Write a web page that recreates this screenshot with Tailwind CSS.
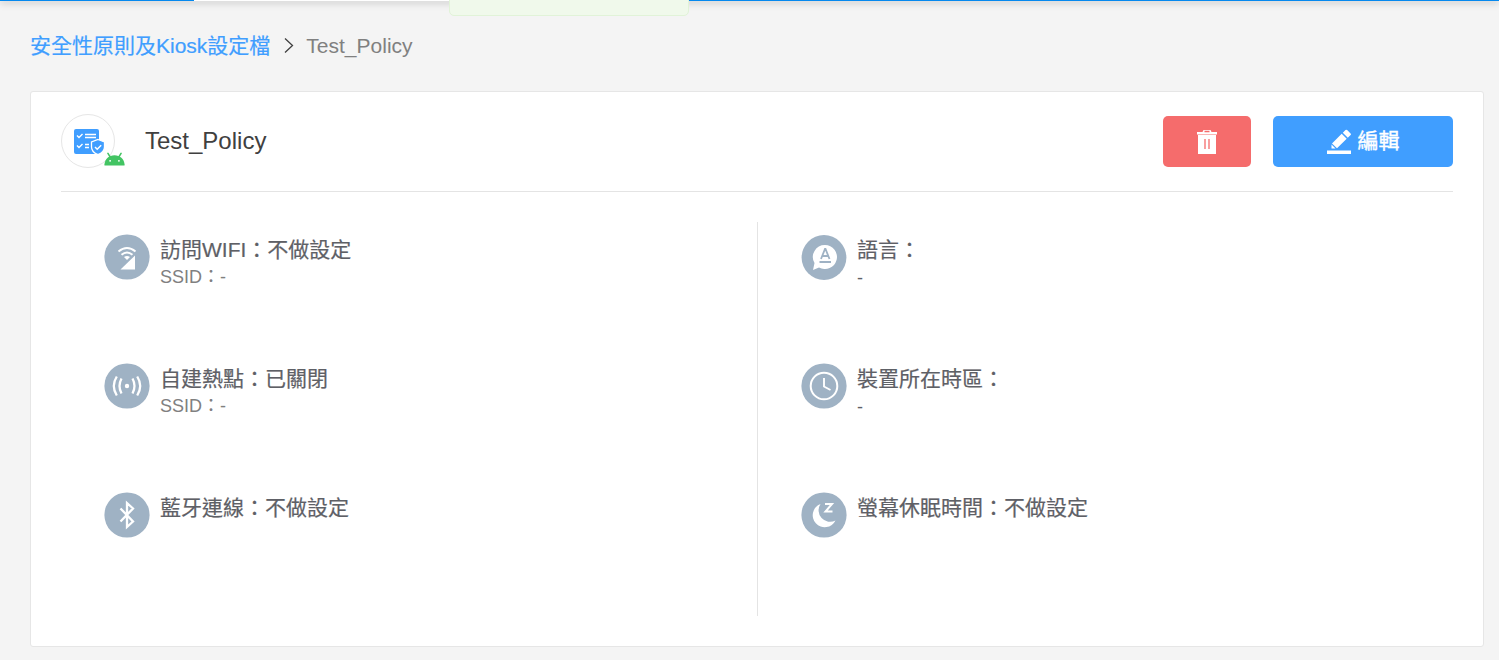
<!DOCTYPE html>
<html lang="zh-Hant">
  <head>
    <meta charset="UTF-8" />
    <meta name="viewport" content="width=device-width, initial-scale=1.0" />
    <title>Test_Policy</title>
    <script src="https://cdn.jsdelivr.net/npm/@tailwindcss/browser@4"></script>
    <style>
      body {
        font-family: 'Liberation Sans', 'Noto Sans CJK TC', sans-serif;
      }
    </style>
  </head>
  <body class="relative h-screen overflow-hidden bg-[#f4f4f4] text-[#5e6066]">
    <!-- Bottom edge of the nav bar -->
    <header class="flex h-px bg-[#0588ee] shadow-[0_1px_7px_rgba(0,0,0,0.7)]">
      <div class="ml-[194px] w-[256px] bg-white"></div>
    </header>

    <!-- Toast -->
    <div class="absolute top-[-24px] left-[449px] h-10 w-[240px] rounded-[5px] border border-[#e1f3d8] bg-[#f0f9eb]"></div>

    <nav class="flex h-[90px] items-center pl-[30px] text-[21px] leading-[30px]">
      <a href="#" class="text-[#409eff] [-webkit-text-stroke:0.2px]">安全性原則及Kiosk設定檔</a>
      <svg class="mr-3 ml-[14px] h-4 w-[10px]" viewBox="0 0 10 16" fill="none" stroke="#404040" stroke-width="1.3"><path d="M1 0.500l7.500 7-7.500 7" /></svg>
      <span class="text-[#808080]">Test_Policy</span>
    </nav>

    <main class="mr-[15px] ml-[30px] h-[556px] rounded-[3px] border border-[#e6e6e6] bg-white px-[30px] pt-[22px]">
      <div class="flex h-[78px] items-start border-b border-[#e4e4e4]">
        <div class="relative flex size-[54px] items-center justify-center rounded-full border border-[#e6e6e6]">
          <svg class="ml-[2px] h-[27px] w-[32px]" viewBox="0 0 32 27">
            <rect x="1" y="1" width="25" height="25" rx="2" fill="#409eff" />
            <g fill="none" stroke="#fff" stroke-width="1.4">
              <path d="M4 7.500l2 2 3.500-3.500M4 17.500l2 2 3.500-3.500" />
              <path d="M12 6.500h11M12 9.500h11M12 16.500h4M12 19.500h4" />
            </g>
            <path d="M25 11.500l6.500 2.500v5c0 3.500-2.500 6-6.500 7.700-4-1.700-6.500-4.200-6.500-7.700v-5z" fill="#409eff" stroke="#fff" stroke-width="1.300" />
            <path d="M22 19l2.200 2.200 4-4" fill="none" stroke="#fff" stroke-width="1.500" />
          </svg>
          <svg class="absolute top-[36px] left-[42px] h-[15px] w-[21px]" viewBox="0 0 22 16">
            <path d="M0.300 15.500v-1.500C1 8.500 5 4.500 11 4.500S21 8.500 21.700 14v1.500z" fill="#43c463" />
            <path d="M4 2.500l2.500 4M18 2.500l-2.500 4" stroke="#43c463" stroke-width="1.700" stroke-linecap="round" />
            <circle cx="6.300" cy="10.500" r="1" fill="#fff" /><circle cx="15.700" cy="10.500" r="1" fill="#fff" />
          </svg>
        </div>
        <h1 class="ml-[30px] text-2xl leading-[54px] text-[#404040]">Test_Policy</h1>
        <button class="mt-[2px] ml-auto flex h-[51px] w-[88px] items-center justify-center rounded-[5px] bg-[#f56c6c]">
          <svg class="h-[25px] w-5" viewBox="0 0 20 25">
            <path d="M0 3h5.500l1-2h7l1 2H20v2.500H0zM1 6h18v19H1z" fill="#fff" />
            <path d="M7.500 2.500h5M8 10v10M12 10v10" stroke="#f56c6c" stroke-width="1.300" fill="none" />
          </svg>
        </button>
        <button class="mt-[2px] ml-[22px] flex h-[51px] w-[180px] items-center justify-center rounded-[5px] bg-[#409eff] text-[21px] leading-[30px] text-white [-webkit-text-stroke:0.4px]">
          <svg class="mr-[7px] h-[25px] w-6" viewBox="0 0 24 25" fill="#fff">
            <path d="M5 14.500L14.700 4.800l5 5L10 19.300zM4.500 15.500l4 4h-4zM15.800 3.700L18.500 1a1.200 1.200 0 0 1 1.600 0l3.500 3.500a1.200 1.200 0 0 1 0 1.600L20.800 8.700zM0 21.500h24V25H0z" />
          </svg>
          <span class="relative top-[-1px]">編輯</span>
        </button>
      </div>

      <div class="mt-[30px] flex h-[394px] text-[21px] leading-[30px]">
        <section class="flex w-[697px] flex-col gap-[83px] border-r border-[#e4e4e4] pt-3 pl-[43px]">
          <div class="flex h-[46px]">
            <svg class="mr-[10px] size-[46px]" viewBox="0 0 46 46">
              <circle cx="23" cy="23" r="22.600" fill="#9fb2c4" />
              <path d="M31 21.500v14H16.500z" fill="#fff" />
              <g fill="none" stroke="#fff" stroke-width="2">
                <path d="M14.500 17.500q8.500-7 17 0M17.500 20.800q5.500-4.500 11 0" />
              </g>
              <path d="M20 23q3-2 6 0l-3 3z" fill="#fff" />
            </svg>
            <div class="pt-px">
              <p class="h-[30px] [-webkit-text-stroke:0.2px]">訪問WIFI：不做設定</p>
              <p class="text-lg leading-[25px] text-[#808080]">SSID：-</p>
            </div>
          </div>
          <div class="flex h-[46px]">
            <svg class="mr-[10px] size-[46px]" viewBox="0 0 46 46">
              <circle cx="23" cy="23" r="22.600" fill="#9fb2c4" />
              <circle cx="23" cy="23" r="2.200" fill="#fff" />
              <g fill="none" stroke="#fff" stroke-width="2.300">
                <path d="M17.500 15.500q-4 7.500 0 15M12.800 13.500q-6 9.500 0 19M28.500 15.500q4 7.500 0 15M33.200 13.500q6 9.500 0 19" />
              </g>
            </svg>
            <div class="pt-px">
              <p class="h-[30px] [-webkit-text-stroke:0.2px]">自建熱點：已關閉</p>
              <p class="text-lg leading-[25px] text-[#808080]">SSID：-</p>
            </div>
          </div>
          <div class="flex h-[46px]">
            <svg class="mr-[10px] size-[46px]" viewBox="0 0 46 46">
              <circle cx="23" cy="23" r="22.600" fill="#9fb2c4" />
              <path d="M16.500 16.500l12.500 13-6 5.500V11l6 5.500L16.500 29.500" fill="none" stroke="#fff" stroke-width="2.300" />
            </svg>
            <p class="pt-px [-webkit-text-stroke:0.2px]">藍牙連線：不做設定</p>
          </div>
        </section>

        <section class="flex flex-col gap-[83px] pt-3 pl-[43px]">
          <div class="flex h-[46px]">
            <svg class="mr-[10px] size-[46px]" viewBox="0 0 46 46">
              <circle cx="23" cy="23.500" r="22.400" fill="#9fb2c4" />
              <path d="M24 11a12 12 0 1 1-6 22.400L12 36l1.500-7A12 12 0 0 1 24 11z" fill="#fff" />
              <path d="M20 25l4-10h.5l4 10M21.500 22h5.500M18.500 28h11.500" fill="none" stroke="#9fb2c4" stroke-width="1.800" />
            </svg>
            <div class="pt-px">
              <p class="h-[30px] [-webkit-text-stroke:0.2px]">語言：</p>
              <p class="text-lg leading-[27px]">-</p>
            </div>
          </div>
          <div class="flex h-[46px]">
            <svg class="mr-[10px] size-[46px]" viewBox="0 0 46 46">
              <circle cx="23" cy="23" r="22.600" fill="#9fb2c4" />
              <circle cx="23" cy="23" r="13.300" fill="none" stroke="#fff" stroke-width="2" />
              <path d="M23 15v8.500l6.500 3.500" fill="none" stroke="#fff" stroke-width="1.900" />
            </svg>
            <div class="pt-px">
              <p class="h-[30px] [-webkit-text-stroke:0.2px]">裝置所在時區：</p>
              <p class="text-lg leading-[27px]">-</p>
            </div>
          </div>
          <div class="flex h-[46px]">
            <svg class="mr-[10px] size-[46px]" viewBox="0 0 46 46">
              <circle cx="23" cy="23" r="22.600" fill="#9fb2c4" />
              <path d="M19.500 12A12 12 0 1 0 34.500 28.500 11.500 11.500 0 0 1 19.500 12z" fill="#fff" />
              <path d="M24 12h7l-6.500 7.500h7" fill="none" stroke="#fff" stroke-width="2" />
            </svg>
            <p class="pt-px [-webkit-text-stroke:0.2px]">螢幕休眠時間：不做設定</p>
          </div>
        </section>
      </div>
    </main>
  </body>
</html>
